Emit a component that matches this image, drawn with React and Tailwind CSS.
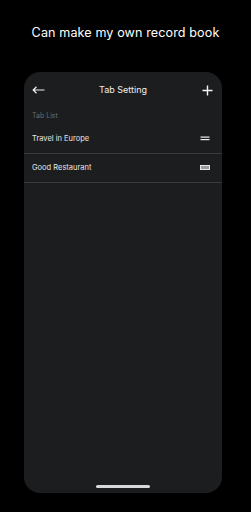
import React from "react";

function Equal({ filled }) {
  return (
    <svg width="10" height="6" viewBox="0 0 10 6" className="block">
      {filled ? (
        <rect x="0.5" y="0.5" width="9" height="4" fill="#9a9a9c" stroke="#e6e6e6" strokeWidth="1" />
      ) : (
        <>
          <rect x="0.5" y="0.5" width="9" height="1.2" fill="#eeeeee" />
          <rect x="0.5" y="3" width="9" height="1.2" fill="#eeeeee" />
        </>
      )}
    </svg>
  );
}

export default function App() {
  return (
    <div
      className="w-[251px] h-[512px] bg-black flex flex-col overflow-hidden"
      style={{ fontFamily: "Inter, 'Noto Sans', sans-serif" }}
    >
      <div className="h-[72px] w-full flex items-start justify-center pt-[25px]">
        <span className="text-[12.6px] leading-[16px] text-white tracking-[0.1px]">
          Can make my own record book
        </span>
      </div>
      <div className="ml-[24px] w-[198px] h-[421px] bg-[#1c1d1f] rounded-[16px] flex flex-col">
        <div className="h-[36px] flex items-center justify-between px-[8px] relative">
          <svg width="13" height="8" viewBox="0 0 13 8" className="block">
            <path d="M12.5 4H1.2M4.5 0.8L1.2 4L4.5 7.2" stroke="#f0f0f0" strokeWidth="1.2" fill="none" />
          </svg>
          <span className="absolute left-0 right-0 text-center text-[9px] text-[#eeeeee] pointer-events-none">
            Tab Setting
          </span>
          <svg width="11" height="11" viewBox="0 0 11 11" className="block mr-[1px]">
            <path d="M5.5 0.5V10.5M0.5 5.5H10.5" stroke="#f5f5f5" strokeWidth="1.4" fill="none" />
          </svg>
        </div>
        <div className="h-[16px] flex items-center px-[8px]">
          <span className="text-[7px] text-[#6a6b6d]">Tab List</span>
        </div>
        <div className="h-[30px] flex items-center justify-between px-[8px] pr-[12px] border-b border-[#38393b]">
          <span className="text-[7.5px] text-[#e6e6e6]">Travel in Europe</span>
          <Equal />
        </div>
        <div className="h-[29px] flex items-center justify-between px-[8px] pr-[12px] border-b border-[#38393b]">
          <span className="text-[7.5px] text-[#e6e6e6]">Good Restaurant</span>
          <Equal filled />
        </div>
        <div className="flex-1" />
        <div className="h-[8px] flex justify-center">
          <div className="w-[54px] h-[3px] rounded-full bg-[#d8d8d8]" />
        </div>
      </div>
    </div>
  );
}
